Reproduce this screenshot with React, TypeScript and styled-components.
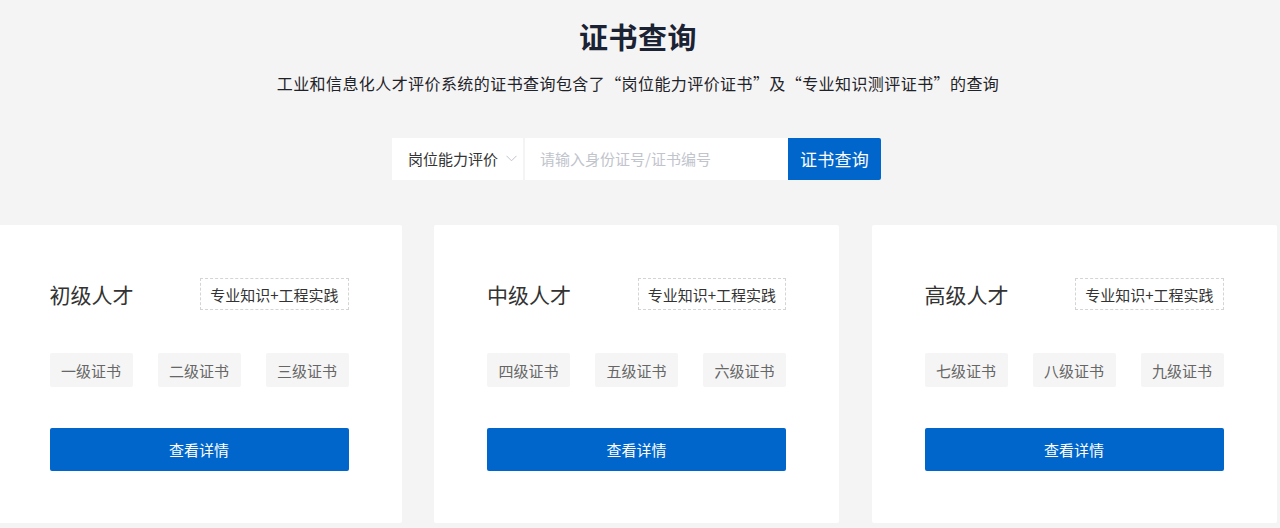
import styled, { createGlobalStyle } from "styled-components";

const GlobalStyle = createGlobalStyle`
  html, body {
    margin: 0;
    padding: 0;
    background: #f4f4f4;
    overflow: hidden;
  }
  body {
    font-family: "Noto Sans CJK SC", "Noto Sans", sans-serif;
  }
`;

const levels = [
  { name: "初级人才", certs: ["一级证书", "二级证书", "三级证书"] },
  { name: "中级人才", certs: ["四级证书", "五级证书", "六级证书"] },
  { name: "高级人才", certs: ["七级证书", "八级证书", "九级证书"] },
];

function App() {
  return (
    <Page>
      <GlobalStyle />
      <Hero>
        <Title>证书查询</Title>
        <Subtitle>
          工业和信息化人才评价系统的证书查询包含了“岗位能力评价证书”及“专业知识测评证书”的查询
        </Subtitle>
        <SearchBar>
          <Select>
            <span>岗位能力评价</span>
            <svg width="11" height="7" viewBox="0 0 11 7" fill="none">
              <path d="M0.5 0.8 L5.5 5.8 L10.5 0.8" stroke="#c0c4cc" strokeWidth="1" />
            </svg>
          </Select>
          <Input placeholder="请输入身份证号/证书编号" />
          <SearchButton>证书查询</SearchButton>
        </SearchBar>
      </Hero>
      <Cards>
        {levels.map((level) => (
          <Card key={level.name}>
            <CardHead>
              <LevelName>{level.name}</LevelName>
              <Tag>专业知识+工程实践</Tag>
            </CardHead>
            <Chips>
              {level.certs.map((c) => (
                <Chip key={c}>{c}</Chip>
              ))}
            </Chips>
            <DetailButton>查看详情</DetailButton>
          </Card>
        ))}
      </Cards>
    </Page>
  );
}

const Page = styled.div`
  width: 1280px;
  height: 528px;
  background: #f4f4f4;
`;

const Hero = styled.div`
  display: flex;
  flex-direction: column;
  align-items: center;
  padding-top: 15px;
`;

const Title = styled.h1`
  margin: 0;
  font-size: 29px;
  line-height: 42px;
  font-weight: 700;
  color: #1b2233;
  letter-spacing: 0.5px;
  padding-right: 4px;
`;

const Subtitle = styled.p`
  margin: 14px 0 0;
  font-size: 16px;
  line-height: 24px;
  color: #1f2329;
  letter-spacing: 0.42px;
  margin-right: 4px;
`;

const SearchBar = styled.div`
  display: flex;
  margin-top: 43px;
  height: 42px;
  margin-right: 7px;
`;

const Select = styled.div`
  width: 133px;
  box-sizing: border-box;
  display: flex;
  align-items: center;
  gap: 8px;
  padding: 0 0 2px 16px;
  background: #fff;
  border-right: 2px solid #f4f4f4;
  font-size: 15px;
  color: #333;
`;

const Input = styled.input`
  width: 263px;
  box-sizing: border-box;
  border: none;
  outline: none;
  padding: 0 12px 2px 15px;
  font-family: inherit;
  font-size: 15px;
  color: #333;
  background: #fff;

  &::placeholder {
    color: #c0c4cc;
  }
`;

const SearchButton = styled.button`
  width: 93px;
  border: none;
  border-radius: 0 2px 2px 0;
  background: #0066cc;
  color: #fff;
  font-family: inherit;
  font-size: 17px;
  letter-spacing: 0.3px;
  padding-bottom: 2px;
  cursor: pointer;
`;

const Cards = styled.div`
  display: grid;
  grid-template-columns: repeat(3, 405px);
  gap: 32.5px;
  margin: 45px 0 0 -3.5px;
`;

const Card = styled.div`
  height: 298px;
  box-sizing: border-box;
  background: #fff;
  border-radius: 2px;
  padding: 53px 53px 0;
  display: flex;
  flex-direction: column;
`;

const CardHead = styled.div`
  display: flex;
  justify-content: space-between;
  align-items: center;
  height: 32px;
`;

const LevelName = styled.div`
  font-size: 21px;
  color: #333;
`;

const Tag = styled.div`
  height: 32px;
  box-sizing: border-box;
  border: 1px dashed #d4d4d4;
  padding: 0 9px;
  display: flex;
  align-items: center;
  font-size: 15px;
  color: #333;
`;

const Chips = styled.div`
  display: flex;
  justify-content: space-between;
  margin-top: 43px;
`;

const Chip = styled.div`
  width: 83px;
  height: 34px;
  display: flex;
  align-items: center;
  justify-content: center;
  background: #f5f5f5;
  border-radius: 2px;
  font-size: 15px;
  color: #666;
`;

const DetailButton = styled.button`
  margin-top: 41px;
  height: 43px;
  border: none;
  border-radius: 2px;
  background: #0066cc;
  color: #fff;
  font-family: inherit;
  font-size: 15px;
  cursor: pointer;
`;

export default App;
